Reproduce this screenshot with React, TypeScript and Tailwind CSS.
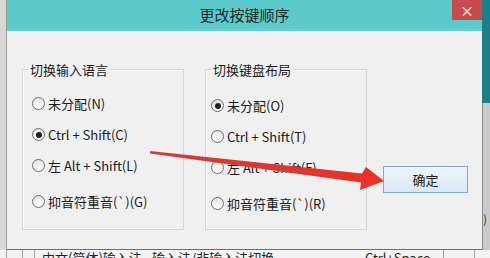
import React from 'react';

const font = { fontFamily: '"Noto Sans CJK SC", "Noto Sans", sans-serif' };

type Opt = { label: string; checked?: boolean };

const leftOptions: Opt[] = [
  { label: '未分配(N)' },
  { label: 'Ctrl + Shift(C)', checked: true },
  { label: '左 Alt + Shift(L)' },
  { label: '抑音符重音(`)(G)' },
];

const rightOptions: Opt[] = [
  { label: '未分配(O)', checked: true },
  { label: 'Ctrl + Shift(T)' },
  { label: '左 Alt + Shift(F)' },
  { label: '抑音符重音(`)(R)' },
];

function Radio({ checked }: { checked?: boolean }) {
  return (
    <span className="flex h-[13px] w-[13px] shrink-0 items-center justify-center rounded-full border border-[#6b6b6b] bg-gradient-to-b from-[#e6e6e6] to-white">
      {checked && <span className="h-[6px] w-[6px] rounded-full bg-[#222]" />}
    </span>
  );
}

function Group({ title, options, indent }: { title: string; options: Opt[]; indent: string }) {
  return (
    <fieldset className="h-[169px] w-[162px] shrink-0 border border-[#d5d5d5] shadow-[inset_1px_1px_0_#fafafa]">
      <legend className="ml-[6px] px-[1px] text-[13px] leading-[17px] text-[#1a1a1a]">{title}</legend>
      <div className={`flex flex-col ${indent}`}>
        {options.map((o, i) => (
          <div
            key={o.label}
            className={`flex h-[31px] items-center gap-[3px] text-[13px] text-[#1a1a1a] ${i === 3 ? 'mt-[5px]' : ''}`}
          >
            <Radio checked={o.checked} />
            <span className="whitespace-nowrap">{o.label}</span>
          </div>
        ))}
      </div>
    </fieldset>
  );
}

export default function App() {
  return (
    <div className="relative flex h-[258px] w-[490px] flex-col overflow-hidden bg-[#e9e9e9]" style={font}>
      <div className="flex h-[250px]">
        {/* window behind, left */}
        <div className="w-[7px] shrink-0 border-r border-[#9d9d9d] bg-[#d7d7d7]" />

        {/* dialog */}
        <div className="flex flex-1 flex-col border-b border-[#6f6f6f] bg-[#f0f0f0]">
          <div className="grid h-[31px] grid-cols-[1fr_auto_1fr] border-b-[3px] border-[#62cfcf] bg-[#5ccaca]">
            <div />
            <div className="pt-[4px] text-[15px] text-[#1f2a2a]">更改按键顺序</div>
            <div className="flex justify-end">
              <div className="flex h-[20px] w-[30px] items-center justify-center bg-[#c84a4e] text-[14px] leading-none text-white">
                ×
              </div>
            </div>
          </div>

          <div className="flex items-start gap-[21px] pl-[15px] pt-[30px]">
            <Group title="切换输入语言" options={leftOptions} indent="pl-[9px] pt-[10px]" />
            <Group title="切换键盘布局" options={rightOptions} indent="pl-[5px] pt-[12px]" />
            <button className="ml-[-5px] mt-[105px] h-[27px] w-[85px] border border-[#80a8d2] bg-gradient-to-b from-[#eef5fc] to-[#dbe8f6] text-[13px] text-[#1a1a1a]">
              确定
            </button>
          </div>
        </div>

        {/* window behind, right */}
        <div className="flex w-[8px] shrink-0 flex-col">
          <div className="h-[103px] bg-[#1f7e87]" />
          <div className="flex flex-1 items-end border-l border-[#8a8a8a] bg-[#cbcbcb] pb-[22px] text-[12px] text-[#333]">)</div>
        </div>
      </div>

      {/* list behind the dialog */}
      <div className="flex h-[8px] items-start overflow-hidden bg-[#f3f3f3] text-[13px] leading-[17px] text-[#222]">
        <div className="h-full w-[7px] shrink-0 border-r border-[#a0a0a0]" />
        <div className="h-full w-[16px] shrink-0 border-r border-[#a0a0a0]" />
        <div className="h-full w-[12px] shrink-0 border-r border-[#a0a0a0]" />
        <div className="mt-[-1px] w-[330px] shrink-0 pl-[7px] whitespace-nowrap">中文(简体)输入法 - 输入法/非输入法切换</div>
        <div className="mt-[-1px] w-[78px] shrink-0 whitespace-nowrap">Ctrl+Space</div>
        <div className="h-full w-[32px] shrink-0 border-l border-r border-[#a0a0a0]" />
      </div>

      {/* red arrow drawn on top */}
      <svg className="pointer-events-none absolute left-0 top-0" width="490" height="258" viewBox="0 0 490 258">
        <defs>
          <linearGradient id="arr" x1="150" y1="152" x2="384" y2="181" gradientUnits="userSpaceOnUse">
            <stop offset="0" stopColor="#c9403a" />
            <stop offset="1" stopColor="#ea3128" />
          </linearGradient>
        </defs>
        <polygon
          points="150,151 362,173.5 366,167 384,181 360,190 361,182.5 150,153.5"
          fill="url(#arr)"
        />
      </svg>
    </div>
  );
}
